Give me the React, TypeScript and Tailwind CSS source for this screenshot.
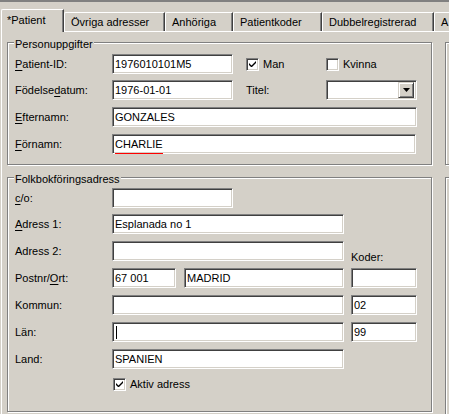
import React from "react";

const BG = "bg-[#d4d0c8]";

function Sunken({ w, value, caret, spell }: { w: string; value?: string; caret?: boolean; spell?: boolean }) {
  return (
    <div
      className={`${w} h-[20px] shrink-0 flex items-center bg-white border border-t-[#808080] border-l-[#808080] border-b-white border-r-white shadow-[inset_1px_1px_0_#404040,inset_-1px_-1px_0_#d4d0c8] pl-[2px] text-black`}
    >
      {caret && <span className="w-px h-[13px] bg-black ml-[1px]" />}
      {value && (
        <span className="relative">
          {value}
          {spell && <span className="absolute left-0 right-0 bottom-[-3px] h-px bg-[#ff0000]" />}
        </span>
      )}
    </div>
  );
}

function Check({ checked }: { checked?: boolean }) {
  return (
    <div className="w-[13px] h-[13px] shrink-0 bg-white border border-t-[#808080] border-l-[#808080] border-b-white border-r-white shadow-[inset_1px_1px_0_#404040,inset_-1px_-1px_0_#d4d0c8] flex items-center justify-center">
      {checked && (
        <svg width="9" height="9" viewBox="0 0 9 9" className="block">
          <path d="M1 3v2l2 2h1l4-4V1L3.5 5.5z" fill="#000" />
        </svg>
      )}
    </div>
  );
}

function Lbl({ pre = "", u = "", post = "" }: { pre?: string; u?: string; post?: string }) {
  return (
    <div className="w-[97px] shrink-0">
      {pre}
      {u && <span className="underline underline-offset-[2px]">{u}</span>}
      {post}
    </div>
  );
}

function GroupBox({ title, className, children }: { title?: string; className: string; children?: React.ReactNode }) {
  return (
    <div className={`relative border border-[#808080] shadow-[inset_1px_1px_0_#fff,1px_1px_0_#fff] ${className}`}>
      {title && (
        <span className={`absolute left-[6px] top-[-5px] ${BG} px-px leading-[13px]`}>{title}</span>
      )}
      {children}
    </div>
  );
}

const tabs = [
  { label: "Övriga adresser", w: "w-[101px]" },
  { label: "Anhöriga", w: "w-[68px]" },
  { label: "Patientkoder", w: "w-[89px]" },
  { label: "Dubbelregistrerad", w: "w-[112px]" },
  { label: "A", w: "w-[40px]" },
];

export default function App() {
  return (
    <div
      className={`w-[449px] h-[414px] overflow-hidden ${BG} text-[11px] text-black leading-[13px] font-['Liberation_Sans',Arial,sans-serif]`}
    >
      <div className="h-[2px] bg-[#808080]" />
      {/* tab strip */}
      <div className="h-[29px] flex items-end">
        <div className={`relative z-10 -mb-px w-[63px] h-[23px] shrink-0 ${BG} border-t border-l border-white border-r border-r-[#404040] shadow-[inset_-1px_0_0_#808080] rounded-tl-[2px] ml-px pl-[5px] pt-[4px]`}>
          *Patient
        </div>
        {tabs.map((t) => (
          <div
            key={t.label}
            className={`${t.w} h-[19px] shrink-0 border-t border-l border-white border-r border-r-[#404040] shadow-[inset_-1px_0_0_#808080] rounded-tl-[2px] pl-[6px] pt-[3px] whitespace-nowrap`}
          >
            {t.label}
          </div>
        ))}
      </div>

      {/* panel */}
      <div className="ml-px h-[400px] border-t border-l border-white pl-[5px] pt-[10px] flex">
        <div className="w-[425px] shrink-0">
          <GroupBox title="Personuppgifter" className="h-[123px] pl-[7px] pt-[11px]">
            <div className="flex items-center h-[20px]">
              <Lbl u="P" post="atient-ID:" />
              <Sunken w="w-[121px]" value="1976010101M5" />
              <div className="ml-[13px] w-[80px] flex items-center gap-[4px]">
                <Check checked />
                <span>Man</span>
              </div>
              <div className="flex items-center gap-[4px]">
                <Check />
                <span>Kvinna</span>
              </div>
            </div>
            <div className="flex items-center h-[20px] mt-[6px]">
              <Lbl pre="Födelse" u="d" post="atum:" />
              <Sunken w="w-[121px]" value="1976-01-01" />
              <div className="ml-[13px] w-[80px]">Titel:</div>
              <div className="w-[91px] h-[20px] flex items-center justify-end bg-white border border-t-[#808080] border-l-[#808080] border-b-white border-r-white shadow-[inset_1px_1px_0_#404040,inset_-1px_-1px_0_#d4d0c8] pr-[2px]">
                <div className={`w-[16px] h-[16px] ${BG} border border-t-[#d4d0c8] border-l-[#d4d0c8] border-b-[#404040] border-r-[#404040] shadow-[inset_1px_1px_0_#fff,inset_-1px_-1px_0_#808080] flex items-center justify-center`}>
                  <svg width="7" height="4" viewBox="0 0 7 4" className="block">
                    <path d="M0 0h7L3.5 4z" fill="#000" />
                  </svg>
                </div>
              </div>
            </div>
            <div className="flex items-center h-[20px] mt-[7px]">
              <Lbl u="E" post="fternamn:" />
              <Sunken w="w-[305px]" value="GONZALES" />
            </div>
            <div className="flex items-center h-[20px] mt-[7px]">
              <Lbl u="F" post="örnamn:" />
              <Sunken w="w-[304px]" value="CHARLIE" spell />
            </div>
          </GroupBox>

          <GroupBox title="Folkbokföringsadress" className="mt-[12px] h-[235px] pl-[7px] pt-[10px]">
            <div className="flex items-center h-[20px]">
              <Lbl u="c" post="/o:" />
              <Sunken w="w-[121px]" />
            </div>
            <div className="flex items-center h-[20px] mt-[6px]">
              <Lbl u="A" post="dress 1:" />
              <Sunken w="w-[232px]" value="Esplanada no 1" />
            </div>
            <div className="flex items-center h-[20px] mt-[7px]">
              <Lbl pre="Adress 2:" />
              <Sunken w="w-[232px]" />
              <div className="ml-[7px] pt-[12px]">Koder:</div>
            </div>
            <div className="flex items-center h-[20px] mt-[7px]">
              <Lbl pre="Postnr/" u="O" post="rt:" />
              <Sunken w="w-[64px]" value="67 001" />
              <div className="ml-[8px]">
                <Sunken w="w-[160px]" value="MADRID" />
              </div>
              <div className="ml-[7px]">
                <Sunken w="w-[66px]" />
              </div>
            </div>
            <div className="flex items-center h-[20px] mt-[7px]">
              <Lbl pre="Kommun:" />
              <Sunken w="w-[232px]" />
              <div className="ml-[7px]">
                <Sunken w="w-[66px]" value="02" />
              </div>
            </div>
            <div className="flex items-center h-[20px] mt-[7px]">
              <Lbl pre="Län:" />
              <Sunken w="w-[232px]" caret />
              <div className="ml-[7px]">
                <Sunken w="w-[66px]" value="99" />
              </div>
            </div>
            <div className="flex items-center h-[20px] mt-[7px]">
              <Lbl pre="Land:" />
              <Sunken w="w-[232px]" value="SPANIEN" />
            </div>
            <div className="flex items-center mt-[9px] ml-[98px] gap-[4px]">
              <Check checked />
              <span>Aktiv adress</span>
            </div>
          </GroupBox>
        </div>

        <div className="ml-[13px] w-[100px] shrink-0">
          <GroupBox className="h-[123px]" />
          <GroupBox className="mt-[12px] h-[260px]" />
        </div>
      </div>
    </div>
  );
}
